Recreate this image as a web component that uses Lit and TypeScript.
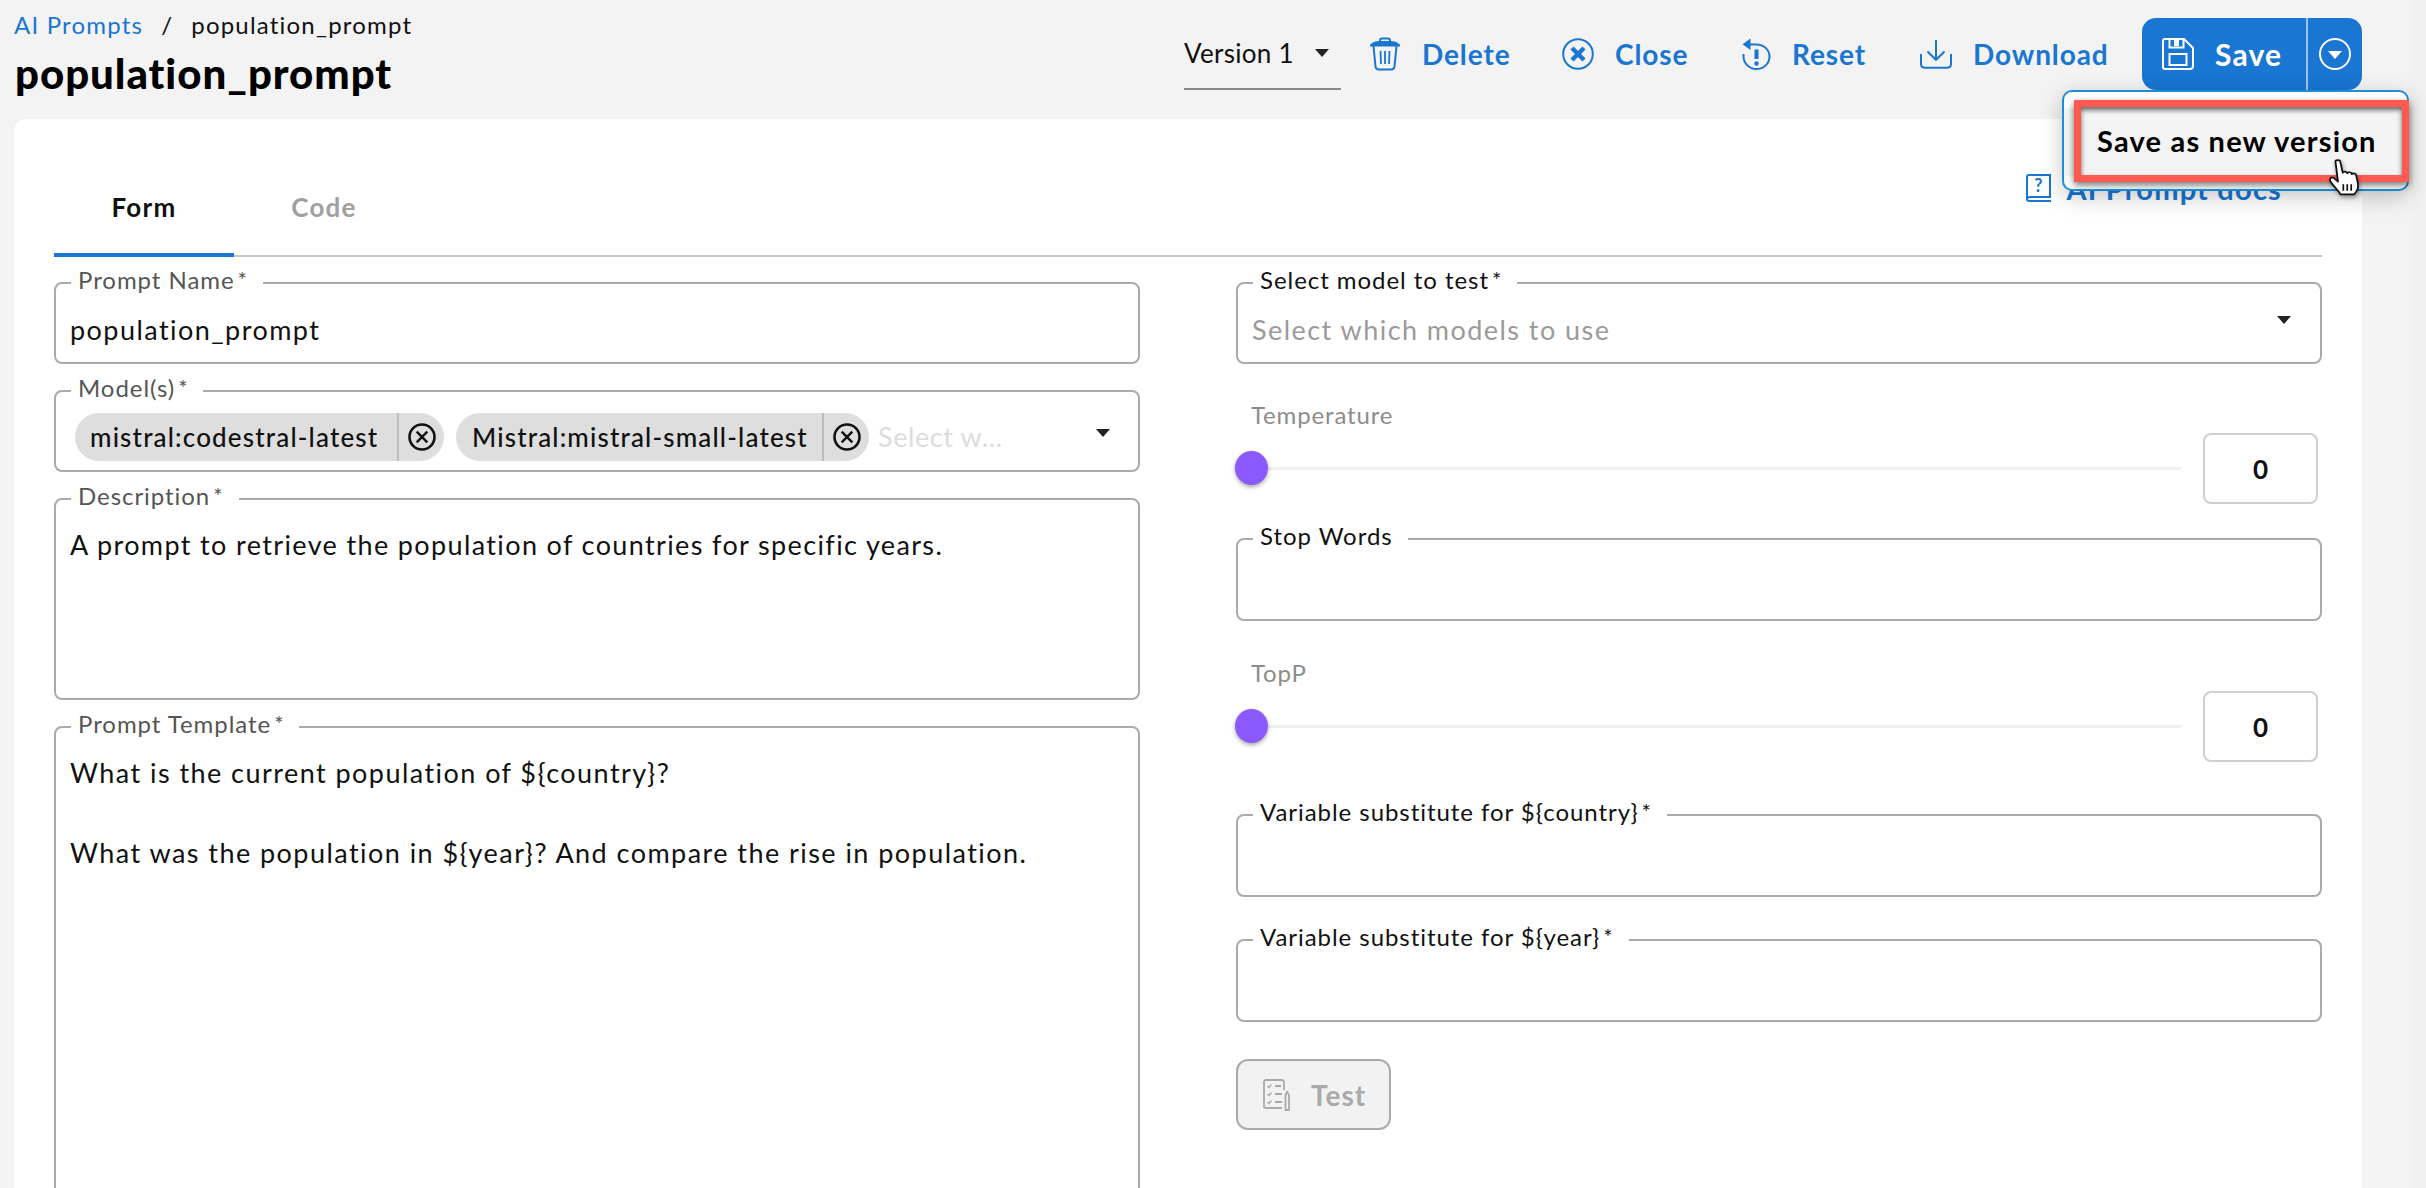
import { LitElement, html, css, svg } from "lit";
import { customElement } from "lit/decorators.js";

const caret = html`<span class="caret"></span>`;

const icons = {
  trash: html`<svg class="ic" width="32" height="34" viewBox="0 0 32 34" fill="none" stroke="#1976d2" stroke-width="2">
    <path d="M11 5V3.5C11 2.5 12 1.5 13 1.5H19C20 1.5 21 2.5 21 3.5V5" />
    <path d="M3 7.5C5 5.5 8 5 10 5H22C24 5 27 5.500 29 7.500Z" fill="#1976d2"/>
    <path d="M1 8.500H31" stroke-width="2"/>
    <path d="M4.500 9L6.500 29.500C6.700 31.500 8 32.500 10 32.500H22C24 32.500 25.300 31.500 25.500 29.500L27.500 9" />
    <path d="M11.500 14L12 27M16 14V27M20.500 14L20 27" stroke-width="1.800"/>
  </svg>`,
  close: html`<svg class="ic" width="32" height="32" viewBox="0 0 32 32" fill="none" stroke="#1976d2">
    <circle cx="16" cy="16" r="14.800" stroke-width="2"/>
    <path d="M10 10L22 22M22 10L10 22" stroke-width="4.400"/>
  </svg>`,
  reset: html`<svg class="ic" width="30" height="32" viewBox="0 0 30 32" fill="none" stroke="#1976d2">
    <path d="M9 6.500H15.500C22.500 6.500 28.500 11.500 28.500 18.500C28.500 25.500 22.700 31 15.500 31C8.500 31 2.500 25.500 2.500 18.500V16" stroke-width="2"/>
    <path d="M9.500 0.500V12L1.500 6.300Z" fill="#1976d2" stroke="none"/>
    <path d="M15.500 11.500V21" stroke-width="4"/>
    <circle cx="15.500" cy="25.500" r="2.200" fill="#1976d2" stroke="none"/>
  </svg>`,
  download: html`<svg class="ic" width="32" height="30" viewBox="0 0 32 30" fill="none" stroke="#1976d2" stroke-width="2">
    <path d="M16 1V20M7.500 12.500L16 20.800L24.500 12.500"/>
    <path d="M1 15V25C1 27.500 2.500 28.800 5 28.800H27C29.500 28.800 31 27.500 31 25V15"/>
  </svg>`,
  save: html`<svg class="ic" width="32" height="32" viewBox="0 0 32 32" fill="none" stroke="#fff" stroke-width="2">
    <path d="M3 1H22L31 10V28C31 30 30 31 28 31H3C2 31 1 30 1 29V3C1 2 2 1 3 1Z"/>
    <path d="M7.500 1V9.500H21.500V1"/>
    <rect x="12" y="2" width="5" height="6" fill="#fff" stroke="none"/>
    <rect x="7.500" y="16" width="17" height="11"/>
  </svg>`,
  chevron: html`<svg class="ic" width="32" height="32" viewBox="0 0 32 32" fill="none">
    <circle cx="16" cy="16" r="15" stroke="#fff" stroke-width="2"/>
    <path d="M9 13H23L16 21Z" fill="#fff"/>
  </svg>`,
  book: html`<svg class="ic" width="26" height="28" viewBox="0 0 26 28" fill="none" stroke="#1976d2" stroke-width="2">
    <path d="M3 1H24V23H4C2.500 23 1 24 1 25.500C1 27 2.500 27 4 27H25" />
    <path d="M3 1C2 1 1 2 1 3V25.500"/>
    <text x="13" y="18" text-anchor="middle" font-family="Lato, sans-serif" font-size="18" font-weight="700" fill="#1976d2" stroke="none">?</text>
  </svg>`,
  test: html`<svg class="ic" width="30" height="32" viewBox="0 0 30 32" fill="none" stroke="#aaa" stroke-width="1.800">
    <path d="M21 11V3C21 2 20 1 19 1H3C2 1 1 2 1 3V27C1 28 2 29 3 29H19"/>
    <path d="M4.500 7L6 8.500L8.500 5.500M4.500 15L6 16.500L8.500 13.500M4.500 23L6 24.500L8.500 21.500" stroke-width="1.400"/>
    <path d="M12 7H18M12 15H19M12 23H19"/>
    <path d="M24 13L26 16V31H22.500V16Z" />
  </svg>`,
  x: html`<svg class="ic" width="28" height="28" viewBox="0 0 28 28" fill="none" stroke="#111">
    <circle cx="14" cy="14" r="12.500" stroke-width="2.600"/>
    <path d="M8.700 8.700L19.300 19.300M19.300 8.700L8.700 19.300" stroke-width="2.400"/>
  </svg>`,
};

const hand = svg`<path d="M7.500 2.500C7.500 0.500 11.500 0.500 11.800 2.500L14 13C14.500 11.500 17.500 11.500 18 13.500C18.800 12 21.800 12.300 22 14.300C23 13.200 26 13.700 26 15.800L27.500 23.500C28 27 26.500 31 24 33.500H12C10.500 30.500 6.500 26.500 3.500 22C1.500 19 3.500 16.500 6 18L9.800 21.500Z" fill="#fff" stroke="#111" stroke-width="1.600" stroke-linejoin="round"/><path d="M14.500 24V30M18 24V30M21.500 24V30" stroke="#111" stroke-width="1.500"/>`;

@customElement("app-root")
export class AppRoot extends LitElement {
  static styles = css`
    :host { display: block; height: 1188px; overflow: hidden; }
    * { box-sizing: border-box; }
    .page { position: relative; display: flex; height: 1188px; background: #f3f3f3; font-family: Lato, Inter, sans-serif; color: #111; overflow: hidden; }
    .main { flex: 1; min-width: 0; padding: 0 48px 0 14px; display: flex; flex-direction: column; }
    .strip { width: 16px; background: #f1f1f1; }
    .ic { display: block; flex: none; }

    .header { height: 119px; flex: none; display: flex; justify-content: space-between; }
    .crumbs { display: flex; height: 30px; margin-top: 10px; font-size: 24px; line-height: 30px; letter-spacing: 1.2px; }
    .crumb-link { color: #1976d2; }
    .crumb-sep { margin: 0 18px; }
    h1 { margin: 11px 0 0 1px; font-size: 42px; line-height: 44px; font-weight: 900; letter-spacing: 0.95px; color: #000; }

    .actions { display: flex; align-items: flex-start; padding-top: 18px; }
    .version { width: 157px; height: 72px; border-bottom: 2px solid #8a8a8a; display: flex; align-items: center; justify-content: space-between; padding: 0 12px 0 0; font-size: 26px; letter-spacing: 0.3px; }
    .caret { flex: none; width: 0; height: 0; border-left: 7px solid transparent; border-right: 7px solid transparent; border-top: 8px solid #222; }
    .act { display: flex; align-items: center; gap: 21px; height: 72px; color: #1976d2; font-size: 28px; font-weight: 700; letter-spacing: 0.9px; }
    .a-delete { margin-left: 28px; width: 140px; }
    .a-close { margin-left: 53px; width: 125px; }
    .a-reset { margin-left: 54px; width: 126px; }
    .a-download { margin-left: 53px; width: 189px; gap: 21px; }
    .savebtn { margin-left: 33px; width: 220px; height: 72px; background: #1976d2; border-radius: 14px; display: flex; color: #fff; font-size: 30px; font-weight: 700; letter-spacing: 1.2px; }
    .save-main { flex: 1; display: flex; align-items: center; gap: 21px; padding-left: 20px; border-right: 2px solid #9cc3ea; }
    .save-drop { width: 54px; display: flex; align-items: center; justify-content: center; }

    .card { flex: 1; min-height: 0; background: #fff; border-radius: 12px 12px 0 0; padding: 40px 40px 0; overflow: hidden; }
    .tabs { display: flex; height: 98px; border-bottom: 2px solid #c8c8c8; }
    .tab { width: 180px; height: 96px; display: flex; align-items: center; justify-content: center; font-size: 26px; font-weight: 700; letter-spacing: 1.2px; color: #111; }
    .tab.on { border-bottom: 4px solid #1976d2; height: 98px; padding-top: 2px; }
    .tab.off { color: #a0a0a0; }
    .docs { margin: 14px 40px 0 auto; display: flex; gap: 14px; align-items: center; height: 30px; color: #1976d2; font-size: 29px; font-weight: 700; letter-spacing: 1.2px; }

    .grid { display: grid; grid-template-columns: 1086px 1086px; column-gap: 96px; padding-top: 25px; align-items: start; }
    .col { display: flex; flex-direction: column; min-width: 0; }

    .field { position: relative; flex: none; height: 82px; border: 2px solid #aaa; border-radius: 8px; padding: 26px 14px 0; font-size: 27px; line-height: 40px; letter-spacing: 1.45px; color: #111; margin-top: 26px; display: flex; white-space: pre-line; }
    .col > .field:first-child { margin-top: 0; }
    .lab { position: absolute; top: -18px; left: 15px; height: 28px; background: #fff; padding: 0 15px 0 7px; font-size: 24px; line-height: 28px; letter-spacing: 0.95px; color: #555; white-space: nowrap; }
    .lab.dark { color: #111; }
    .star { font-size: 22px; margin-left: 3px; vertical-align: 1px; }
    .grow { flex: 1; min-width: 0; }
    .ph { color: #9a9a9a; }
    .field .caret { margin: 6px 15px 0 0; }

    .chips { padding: 21px 0 0 19px; gap: 12px; align-items: flex-start; }
    .chip { flex: none; height: 48px; background: #dedede; border-radius: 24px; display: flex; align-items: center; line-height: 48px; font-size: 26px; font-weight: 500; letter-spacing: 1.15px; white-space: nowrap; }
    .chip.c1 { width: 369px; padding-left: 15px; }
    .chip.c2 { width: 413px; padding-left: 16px; }
    .chip-x { flex: none; width: 47px; height: 48px; border-left: 2px solid #bdbdbd; display: flex; align-items: center; justify-content: center; padding-left: 1px; }
    .chips .ghost { margin-left: -3px; color: #dcdcdc; line-height: 48px; letter-spacing: 0.6px; white-space: nowrap; }
    .chips .caret { margin: 16px 28px 0 auto; }

    .h-desc { height: 202px; padding-top: 25px; letter-spacing: 1.37px; }
    .h-tpl { height: 640px; padding-top: 25px; }

    .slider { margin-top: 40px; flex: none; }
    .slider.second { margin-top: 41px; }
    .slider-lab { height: 26px; line-height: 22px; font-size: 24px; letter-spacing: 0.85px; color: #8c8c8c; padding-left: 15px; }
    .slider-row { margin-top: 3px; display: flex; align-items: center; gap: 21px; padding-right: 4px; }
    .track { position: relative; flex: 1; height: 3px; background: #f0f0f0; }
    .thumb { position: absolute; left: -1px; top: -16px; width: 33px; height: 34px; border-radius: 50%; background: #8c59ff; box-shadow: 0 2px 4px rgba(0,0,0,.35); }
    .num { width: 115px; height: 71px; border: 2px solid #cfcfcf; border-radius: 8px; display: flex; align-items: center; justify-content: center; font-size: 26px; font-weight: 700; color: #111; }
    .mt-stop { margin-top: 34px; height: 83px; }
    .mt-v1 { margin-top: 52px; height: 83px; }
    .mt-v2 { margin-top: 42px; height: 83px; }
    .test { margin-top: 37px; width: 155px; height: 71px; border: 2px solid #aaa; border-radius: 12px; background: #f2f2f2; color: #aaa; display: flex; align-items: center; gap: 18px; padding-left: 25px; font-size: 28px; font-weight: 700; letter-spacing: 1px; }

    .popup { position: absolute; left: 2062px; top: 90px; width: 347px; height: 101px; background: #fff; border: 2px solid #1a8fd8; border-radius: 10px; padding-top: 16px; box-shadow: 0 6px 22px rgba(0,0,0,.22); }
    .item { height: 68px; background: #f4f4f4; padding-left: 33px; font-size: 29px; line-height: 66px; font-weight: 700; letter-spacing: 1.2px; color: #000; white-space: nowrap; }
    .mark { position: absolute; left: 10px; top: 8px; width: 335px; height: 82px; border: 7px solid #ff5a50; box-shadow: 0 3px 7px rgba(0,0,0,.55), inset 0 3px 5px rgba(0,0,0,.6); pointer-events: none; }
    .cursor { position: absolute; left: 2327px; top: 159px; filter: drop-shadow(1px 2px 2px rgba(0,0,0,.4)); }
  `;

  private slider(label: string, second = false) {
    return html`<div class="slider ${second ? "second" : ""}">
      <div class="slider-lab">${label}</div>
      <div class="slider-row">
        <div class="track"><div class="thumb"></div></div>
        <div class="num">0</div>
      </div>
    </div>`;
  }

  private lab(text: string, star = true, dark = false) {
    return html`<span class="lab ${dark ? "dark" : ""}">${text}${star ? html`<span class="star">*</span>` : ""}</span>`;
  }

  render() {
    return html`<div class="page">
      <div class="main">
        <header class="header">
          <div>
            <div class="crumbs"><span class="crumb-link">AI Prompts</span><span class="crumb-sep">/</span><span>population_prompt</span></div>
            <h1>population_prompt</h1>
          </div>
          <div class="actions">
            <div class="version"><span>Version 1</span>${caret}</div>
            <div class="act a-delete">${icons.trash}<span>Delete</span></div>
            <div class="act a-close">${icons.close}<span>Close</span></div>
            <div class="act a-reset">${icons.reset}<span>Reset</span></div>
            <div class="act a-download">${icons.download}<span>Download</span></div>
            <div class="savebtn">
              <div class="save-main">${icons.save}<span>Save</span></div>
              <div class="save-drop">${icons.chevron}</div>
            </div>
          </div>
        </header>
        <section class="card">
          <div class="tabs">
            <div class="tab on">Form</div>
            <div class="tab off">Code</div>
            <div class="docs">${icons.book}<span>AI Prompt docs</span></div>
          </div>
          <div class="grid">
            <div class="col">
              <div class="field">${this.lab("Prompt Name")}<span class="grow">population_prompt</span></div>
              <div class="field chips">${this.lab("Model(s)")}
                <div class="chip c1"><span class="grow">mistral:codestral-latest</span><span class="chip-x">${icons.x}</span></div>
                <div class="chip c2"><span class="grow">Mistral:mistral-small-latest</span><span class="chip-x">${icons.x}</span></div>
                <span class="ghost">Select w...</span>${caret}
              </div>
              <div class="field h-desc">${this.lab("Description")}<span class="grow">A prompt to retrieve the population of countries for specific years.</span></div>
              <div class="field h-tpl">${this.lab("Prompt Template")}<span class="grow">What is the current population of \${country}?

What was the population in \${year}? And compare the rise in population.</span></div>
            </div>
            <div class="col">
              <div class="field">${this.lab("Select model to test", true, true)}<span class="grow ph">Select which models to use</span>${caret}</div>
              ${this.slider("Temperature")}
              <div class="field mt-stop">${this.lab("Stop Words", false, true)}</div>
              ${this.slider("TopP", true)}
              <div class="field mt-v1">${this.lab("Variable substitute for ${country}", true, true)}</div>
              <div class="field mt-v2">${this.lab("Variable substitute for ${year}", true, true)}</div>
              <div class="test">${icons.test}<span>Test</span></div>
            </div>
          </div>
        </section>
      </div>
      <div class="strip"></div>
      <div class="popup">
        <div class="item">Save as new version</div>
        <div class="mark"></div>
      </div>
      <svg class="cursor" width="36" height="38" viewBox="0 0 32 36" preserveAspectRatio="none">${hand}</svg>
    </div>`;
  }
}
